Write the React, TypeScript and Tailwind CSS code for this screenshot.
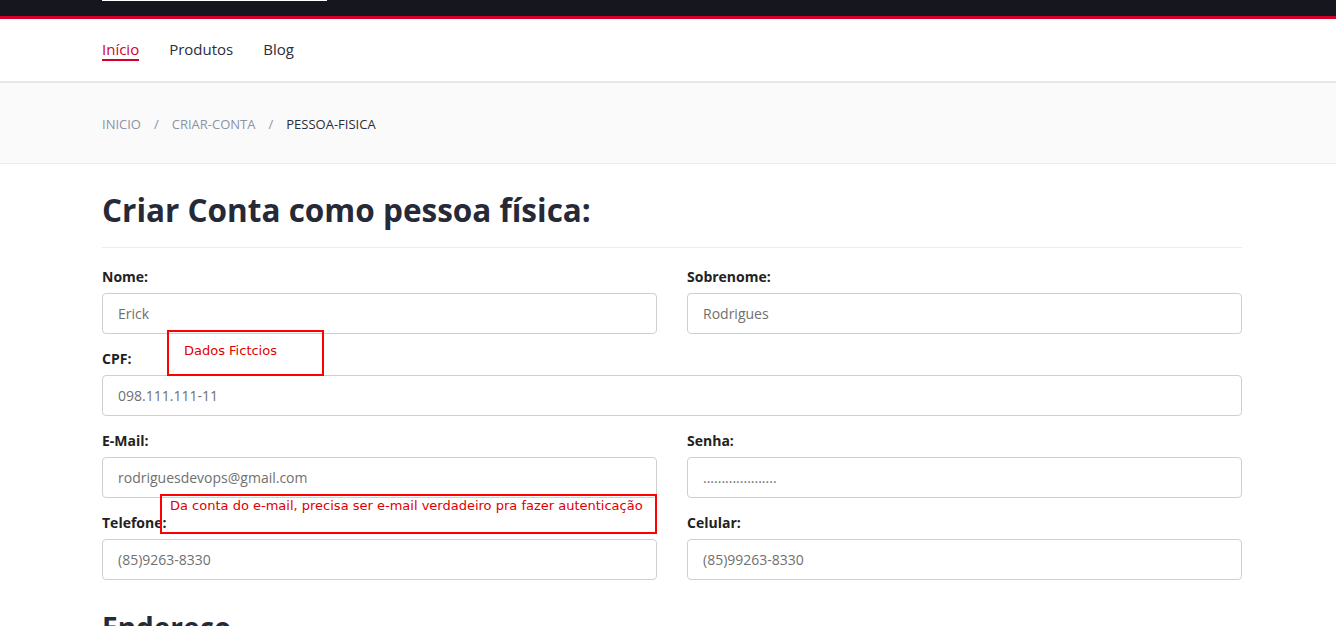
import React from 'react';

const font = { fontFamily: '"Open Sans", "Liberation Sans", sans-serif' };
const noteFont = { fontFamily: '"DejaVu Sans", sans-serif', fontSize: 13 };

interface FieldProps {
  label: string;
  value: string;
  password?: boolean;
}

function Field({ label, value, password }: FieldProps) {
  return (
    <div className="flex flex-col mb-[15px]">
      <label className="text-[14px] leading-[20px] font-bold text-[#222] mb-[6px]">{label}</label>
      <input
        readOnly
        type={password ? 'password' : 'text'}
        value={value}
        className="h-[41px] w-full rounded-[4px] border border-[#cfcfcf] bg-white px-[15px] text-[14px] text-[#707070] outline-none"
      />
    </div>
  );
}

export default function App() {
  return (
    <div className="min-h-screen bg-white" style={font}>
      {/* Top bar */}
      <div className="h-[16px] bg-[#16161f]">
        <div className="ml-[102px] h-[1px] w-[225px] bg-white" />
      </div>
      <div className="h-[3px] bg-[#d3002a]" />

      {/* Nav */}
      <nav className="h-[64px] border-b-2 border-[#e3e7ec] bg-white">
        <ul className="ml-[102px] flex h-full items-center gap-[30px] pb-[3px] text-[15px] leading-[20px] text-[#2a2d3a]">
          <li className="relative text-[#d3002a]">
            Início
            <span className="absolute left-0 right-0 -bottom-[2px] h-[2px] bg-[#d3002a]" />
          </li>
          <li>Produtos</li>
          <li>Blog</li>
        </ul>
      </nav>

      {/* Breadcrumb */}
      <div className="h-[81px] border-b border-[#ebebf0] bg-[#fafafa]">
        <div className="ml-[102px] flex h-full items-center gap-[13px] pt-[3px] text-[13px] uppercase text-[#8b93a7]">
          <span>Inicio</span>
          <span>/</span>
          <span>Criar-conta</span>
          <span>/</span>
          <span className="text-[#2a2d3a]">Pessoa-fisica</span>
        </div>
      </div>

      {/* Content */}
      <div className="relative ml-[102px] w-[1140px] pt-[26px]">
        <h1 className="text-[31.5px] leading-[40px] font-bold text-[#262938]">
          Criar Conta como pessoa física:
        </h1>
        <hr className="mt-[17px] border-t border-[#ececec]" />

        <div className="mt-[19px] grid grid-cols-2 gap-x-[30px]">
          <Field label="Nome:" value="Erick" />
          <Field label="Sobrenome:" value="Rodrigues" />
          <div className="col-span-2">
            <Field label="CPF:" value="098.111.111-11" />
          </div>
          <Field label="E-Mail:" value="rodriguesdevops@gmail.com" />
          <Field label="Senha:" value="...................." />
          <Field label="Telefone:" value="(85)9263-8330" />
          <Field label="Celular:" value="(85)99263-8330" />
        </div>

        <h2 className="mt-[14px] text-[28px] leading-[36px] font-bold text-[#262938]">Endereço</h2>

        {/* Annotation overlays */}
        <div
          className="absolute left-[65px] top-[166px] h-[46px] w-[157px] border-[2.5px] border-[#ff0000] pl-[15px] pt-[9px] text-[#e00000]"
          style={noteFont}
        >
          Dados Fictcios
        </div>
        <div
          className="absolute left-[58px] top-[330px] h-[40px] w-[497px] border-[2.5px] border-[#ff0000] pl-[8px] text-[#e00000]"
          style={noteFont}
        >
          Da conta do e-mail, precisa ser e-mail verdadeiro pra fazer autenticação
        </div>
      </div>
    </div>
  );
}
